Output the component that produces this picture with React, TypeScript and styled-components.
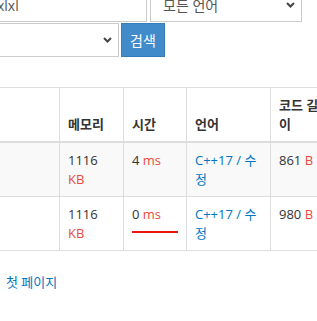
import React from "react";
import styled, { createGlobalStyle } from "styled-components";

const Global = createGlobalStyle`
  html, body { margin: 0; padding: 0; background: #fff; overflow: hidden; }
  body {
    font-family: "Open Sans", "Noto Sans CJK KR", sans-serif;
    font-size: 13px;
    line-height: 1.42857;
    color: #333;
  }
`;

const Page = styled.div`
  width: 350px;
  margin: -12px 0 0 -16px;
`;

const Form = styled.form`
  display: flex;
  flex-direction: column;
  gap: 1px;
`;

const FormRow = styled.div<{ $gap: number }>`
  display: flex;
  gap: ${(p) => p.$gap}px;
`;

const TextInput = styled.input<{ $w: number }>`
  box-sizing: border-box;
  width: ${(p) => p.$w}px;
  height: 34px;
  padding: 6px 12px;
  font-family: "Open Sans", "Noto Sans CJK KR", sans-serif;
  font-size: 14px;
  color: #555;
  border: 1px solid #ccc;
  border-radius: 0;
  background: #fff;
  outline: none;
`;

const SelectWrap = styled.div<{ $w: number }>`
  position: relative;
  width: ${(p) => p.$w}px;
  height: 34px;
`;

const Select = styled.select`
  appearance: none;
  box-sizing: border-box;
  width: 100%;
  height: 100%;
  padding: 6px 12px;
  font-family: "Open Sans", "Noto Sans CJK KR", sans-serif;
  font-size: 14px;
  color: #555;
  border: 1px solid #ccc;
  border-radius: 0;
  background: #fff;
  outline: none;
`;

const Chevron = styled.svg`
  position: absolute;
  right: 7px;
  top: 14px;
  width: 9px;
  height: 6px;
  pointer-events: none;
`;

const SearchButton = styled.button`
  box-sizing: border-box;
  width: 44px;
  height: 34px;
  padding: 0;
  font-family: "Open Sans", "Noto Sans CJK KR", sans-serif;
  font-size: 14px;
  color: #fff;
  background: #428bca;
  border: 1px solid #357ebd;
  border-radius: 0;
`;

const Table = styled.table`
  margin-top: 30px;
  border-collapse: collapse;
  table-layout: fixed;
  width: 346px;
`;

const Th = styled.th`
  padding: 8px;
  text-align: left;
  vertical-align: bottom;
  font-weight: bold;
  border: 1px solid #ddd;
  border-bottom-width: 2px;
`;

const Tr = styled.tr<{ $striped?: boolean }>`
  background: ${(p) => (p.$striped ? "#f9f9f9" : "#fff")};
`;

const Td = styled.td`
  padding: 8px;
  vertical-align: top;
  border: 1px solid #ddd;
`;

const Unit = styled.span`
  color: #e74c3c;
`;

const Link = styled.a`
  color: #0076c0;
  text-decoration: none;
`;

const Mark = styled.span`
  display: block;
  height: 2px;
  margin-top: 7px;
  background: #e8150f;
`;

const Pager = styled.div`
  margin: 22px 0 0 22px;
`;

const Arrow = () => (
  <Chevron viewBox="0 0 9 6">
    <path d="M1 1 L4.5 4.5 L8 1" fill="none" stroke="#444" strokeWidth="2" />
  </Chevron>
);

const rows = [
  { time: "4", len: "861", striped: true, mark: false },
  { time: "0", len: "980", striped: false, mark: true },
];

export default function App() {
  return (
    <>
      <Global />
      <Page>
        <Form>
          <FormRow $gap={3}>
            <TextInput $w={163} defaultValue="xlxl" />
            <SelectWrap $w={152}>
              <Select defaultValue="all">
                <option value="all">모든 언어</option>
              </Select>
              <Arrow />
            </SelectWrap>
          </FormRow>
          <FormRow $gap={2}>
            <SelectWrap $w={135}>
              <Select defaultValue="all">
                <option value="all"> </option>
              </Select>
              <Arrow />
            </SelectWrap>
            <SearchButton type="button">검색</SearchButton>
          </FormRow>
        </Form>
        <Table>
          <colgroup>
            <col style={{ width: 75 }} />
            <col style={{ width: 64 }} />
            <col style={{ width: 63 }} />
            <col style={{ width: 84 }} />
            <col style={{ width: 60 }} />
          </colgroup>
          <thead>
            <tr>
              <Th></Th>
              <Th>메모리</Th>
              <Th>시간</Th>
              <Th>언어</Th>
              <Th>코드 길이</Th>
            </tr>
          </thead>
          <tbody>
            {rows.map((r) => (
              <Tr key={r.len} $striped={r.striped}>
                <Td></Td>
                <Td>
                  1116 <Unit>KB</Unit>
                </Td>
                <Td>
                  {r.time} <Unit>ms</Unit>
                  {r.mark && <Mark />}
                </Td>
                <Td>
                  <Link href="#">C++17 / 수정</Link>
                </Td>
                <Td>
                  {r.len} <Unit>B</Unit>
                </Td>
              </Tr>
            ))}
          </tbody>
        </Table>
        <Pager>
          <Link href="#">첫 페이지</Link>
        </Pager>
      </Page>
    </>
  );
}
